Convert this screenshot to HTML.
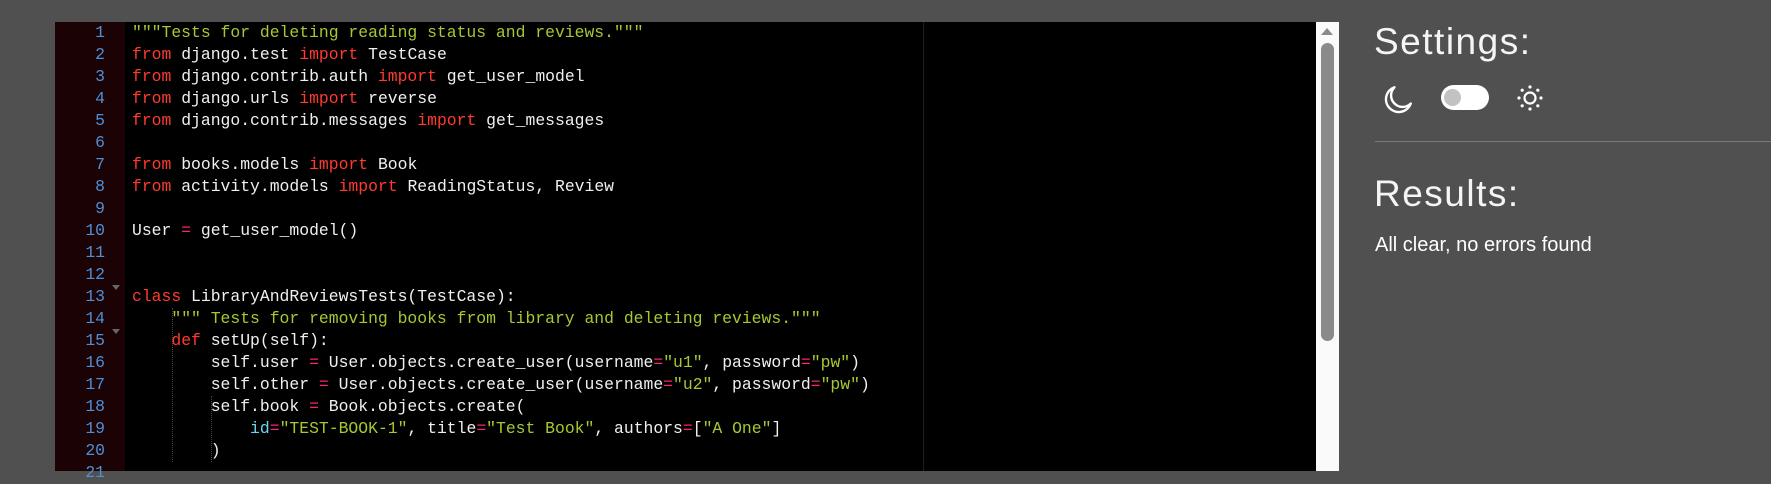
<!DOCTYPE html>
<html><head><style>
*{margin:0;padding:0;box-sizing:border-box}
body{width:1771px;height:471px;background:#505050;position:relative;overflow:hidden}
#ed{position:absolute;left:55px;top:22px;width:1261px;height:449px;background:#000}
#gut{position:absolute;left:0;top:0;width:70px;height:100%;background:#1b0204}
.ln{position:absolute;left:0;width:50px;text-align:right;color:#4f8fd6;font:16.4px/22px "Liberation Mono",monospace}
.cd{position:absolute;left:77px;white-space:pre;color:#f0f0f0;font:16.4px/22px "Liberation Mono",monospace}
.k{color:#ff3b30}.s{color:#a6c832}.o{color:#f92672}.p{color:#66d9ef}
.fold{position:absolute;left:57px;width:0;height:0;border-left:4px solid transparent;border-right:4px solid transparent;border-top:5px solid #666}
.guide{position:absolute;border-left:1px dotted #444;width:0}
#sb{position:absolute;left:1316px;top:22px;width:23px;height:449px;background:#fafafa}
#thumb{position:absolute;left:5px;top:21px;width:13px;height:298px;background:#8a8a8a;border-radius:7px}
#arr{position:absolute;left:5px;top:6px;border-left:6px solid transparent;border-right:6px solid transparent;border-bottom:7px solid #8a8a8a}
.h{position:absolute;left:1374px;color:#f5f5f5;font-family:"Liberation Sans",sans-serif;font-size:37px;letter-spacing:1.5px}
</style></head><body>
<div id="ed">
<div id="gut"></div>
<div style="position:absolute;left:868px;top:0;width:1px;height:100%;background:#1e1e1e"></div>
<div class="guide" style="left:117px;top:286px;height:154px"></div>
<div class="guide" style="left:156px;top:374px;height:66px"></div>
<div class="fold" style="top:263px"></div>
<div class="fold" style="top:307px"></div>
<div class="ln" style="top:0">1<br>2<br>3<br>4<br>5<br>6<br>7<br>8<br>9<br>10<br>11<br>12<br>13<br>14<br>15<br>16<br>17<br>18<br>19<br>20<br>21</div>
<div class="cd" style="top:0"><span class="s">"""Tests for deleting reading status and reviews."""</span>
<span class="k">from</span> django.test <span class="k">import</span> TestCase
<span class="k">from</span> django.contrib.auth <span class="k">import</span> get_user_model
<span class="k">from</span> django.urls <span class="k">import</span> reverse
<span class="k">from</span> django.contrib.messages <span class="k">import</span> get_messages

<span class="k">from</span> books.models <span class="k">import</span> Book
<span class="k">from</span> activity.models <span class="k">import</span> ReadingStatus, Review

User <span class="o">=</span> get_user_model()


<span class="k">class</span> LibraryAndReviewsTests(TestCase):
    <span class="s">""" Tests for removing books from library and deleting reviews."""</span>
    <span class="k">def</span> setUp(self):
        self.user <span class="o">=</span> User.objects.create_user(username<span class="o">=</span><span class="s">"u1"</span>, password<span class="o">=</span><span class="s">"pw"</span>)
        self.other <span class="o">=</span> User.objects.create_user(username<span class="o">=</span><span class="s">"u2"</span>, password<span class="o">=</span><span class="s">"pw"</span>)
        self.book <span class="o">=</span> Book.objects.create(
            <span class="p">id</span><span class="o">=</span><span class="s">"TEST-BOOK-1"</span>, title<span class="o">=</span><span class="s">"Test Book"</span>, authors<span class="o">=</span>[<span class="s">"A One"</span>]
        )
</div>
</div>
<div id="sb"><div id="arr"></div><div id="thumb"></div></div>
<div class="h" style="top:21px">Settings:</div>
<svg style="position:absolute;left:1381px;top:83px" width="34" height="34" viewBox="0 0 24 24">
<path d="M21 14.5A9 9 0 1 1 9.5 3 7 7 0 0 0 21 14.5z" fill="none" stroke="#fff" stroke-width="1.7" stroke-linejoin="round"/></svg>
<div style="position:absolute;left:1441px;top:85px;width:48px;height:25px;border-radius:13px;background:#fff"></div>
<div style="position:absolute;left:1444px;top:89px;width:17px;height:17px;border-radius:50%;background:#c2c2c2"></div>
<svg style="position:absolute;left:1514px;top:82px" width="32" height="32" viewBox="0 0 32 32">
<circle cx="16" cy="16" r="5.5" fill="none" stroke="#fff" stroke-width="2.2"/>
<g fill="#fff"><circle cx="16" cy="5" r="1.6"/><circle cx="16" cy="27" r="1.6"/><circle cx="5" cy="16" r="1.6"/><circle cx="27" cy="16" r="1.6"/><circle cx="8.2" cy="8.2" r="1.6"/><circle cx="23.8" cy="8.2" r="1.6"/><circle cx="8.2" cy="23.8" r="1.6"/><circle cx="23.8" cy="23.8" r="1.6"/></g></svg>
<div style="position:absolute;left:1375px;top:141px;width:396px;height:1px;background:#7a7a7a"></div>
<div class="h" style="top:173px">Results:</div>
<div style="position:absolute;left:1375px;top:234px;color:#fff;font-family:'Liberation Sans',sans-serif;font-size:20px">All clear, no errors found</div>
</body></html>
